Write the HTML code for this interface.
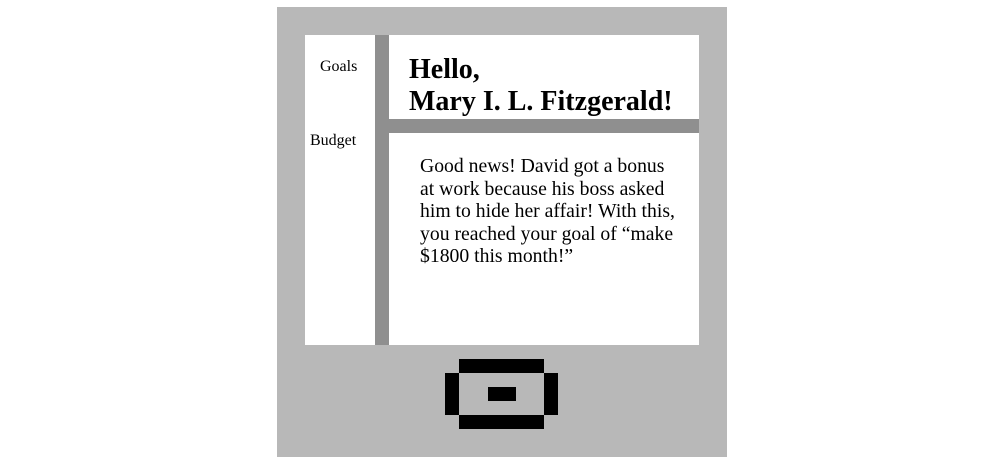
<!DOCTYPE html>
<html><head><style>
body{margin:0;width:1002px;height:464px;background:#fff;position:relative;font-family:"Liberation Serif",serif;overflow:hidden}
div{position:absolute}
.k{background:#000}
</style></head><body>
<div style="left:277px;top:7px;width:450px;height:450px;background:#b8b8b8"></div>
<div style="left:305px;top:35px;width:394px;height:310px;background:#fff"></div>
<div style="left:375px;top:35px;width:14px;height:310px;background:#8f8f8f"></div>
<div style="left:389px;top:119px;width:310px;height:14px;background:#8f8f8f"></div>
<div style="left:320px;top:58px;font-size:16px">Goals</div>
<div style="left:310px;top:132px;font-size:16px">Budget</div>
<div style="left:409px;top:54px;font-size:28px;font-weight:bold;line-height:32px">Hello,<br>Mary I. L. Fitzgerald!</div>
<div style="left:420px;top:155px;width:262px;font-size:19.7px;line-height:22.6px">Good news! David got a bonus at work because his boss asked him to hide her affair! With this, you reached your goal of “make $1800 this month!”</div>
<div class="k" style="left:459px;top:359px;width:85px;height:14px"></div>
<div class="k" style="left:445px;top:373px;width:14px;height:42px"></div>
<div class="k" style="left:544px;top:373px;width:14px;height:42px"></div>
<div class="k" style="left:459px;top:415px;width:85px;height:14px"></div>
<div class="k" style="left:488px;top:387px;width:28px;height:14px"></div>
</body></html>
